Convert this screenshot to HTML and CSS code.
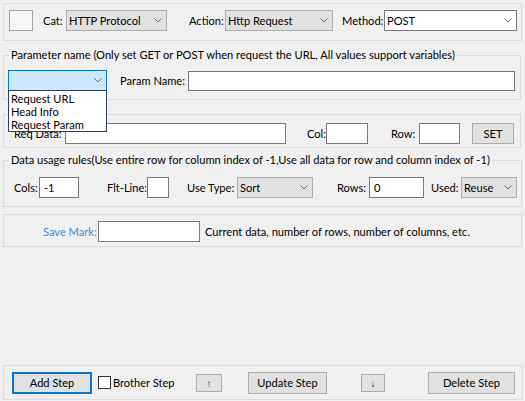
FILE: index.html
```html
<!DOCTYPE html>
<html>
<head>
<meta charset="utf-8">
<title>Step Editor</title>
<link rel="stylesheet" href="styles.css">
</head>
<body>
<div class="app">
  <div class="panel top">
    <div class="swatch"></div>
    <span class="lbl l-cat">Cat:</span>
    <div class="combo c-cat"><span class="val">HTTP Protocol</span><svg class="chev" width="8" height="5" viewBox="0 0 8 5"><path d="M0.5 0.5L4 4L7.5 0.5" fill="none" stroke="#6a6a6a"/></svg></div>
    <span class="lbl l-action">Action:</span>
    <div class="combo c-action"><span class="val">Http Request</span><svg class="chev" width="8" height="5" viewBox="0 0 8 5"><path d="M0.5 0.5L4 4L7.5 0.5" fill="none" stroke="#6a6a6a"/></svg></div>
    <span class="lbl l-method">Method:</span>
    <div class="combo edit c-method"><span class="val">POST</span><svg class="chev" width="8" height="5" viewBox="0 0 8 5"><path d="M0.5 0.5L4 4L7.5 0.5" fill="none" stroke="#6a6a6a"/></svg></div>
  </div>

  <fieldset class="grp g-param">
    <legend>Parameter name (Only set GET or POST when request the URL, All values support variables)</legend>
    <div class="row">
      <div class="dd-wrap">
        <div class="combo focus c-param"><span class="val"></span><svg class="chev" width="8" height="5" viewBox="0 0 8 5"><path d="M0.5 0.5L4 4L7.5 0.5" fill="none" stroke="#6a6a6a"/></svg></div>
        <ul class="dd-list">
          <li>Request URL</li>
          <li>Head Info</li>
          <li>Request Param</li>
        </ul>
      </div>
      <span class="lbl l-pname">Param Name:</span>
      <div class="input i-pname"></div>
    </div>
  </fieldset>

  <div class="panel g-req">
    <span class="lbl l-req">Req Data:</span>
    <div class="input i-req"></div>
    <span class="lbl l-col">Col:</span>
    <div class="input i-col"></div>
    <span class="lbl l-row">Row:</span>
    <div class="input i-row"></div>
    <div class="btn b-set">SET</div>
  </div>

  <fieldset class="grp g-usage">
    <legend>Data usage rules(Use entire row for column index of -1,Use all data for row and column index of -1)</legend>
    <div class="row">
      <span class="lbl l-cols">Cols:</span>
      <div class="input i-cols">-1</div>
      <span class="lbl l-flt">Flt-Line:</span>
      <div class="input i-flt"></div>
      <span class="lbl l-type">Use Type:</span>
      <div class="combo c-type"><span class="val">Sort</span><svg class="chev" width="8" height="5" viewBox="0 0 8 5"><path d="M0.5 0.5L4 4L7.5 0.5" fill="none" stroke="#6a6a6a"/></svg></div>
      <span class="lbl l-rows">Rows:</span>
      <div class="input i-rows">0</div>
      <span class="lbl l-used">Used:</span>
      <div class="combo c-used"><span class="val">Reuse</span><svg class="chev" width="8" height="5" viewBox="0 0 8 5"><path d="M0.5 0.5L4 4L7.5 0.5" fill="none" stroke="#6a6a6a"/></svg></div>
    </div>
  </fieldset>

  <div class="panel g-save">
    <span class="lbl l-save">Save Mark:</span>
    <div class="input i-save"></div>
    <span class="lbl l-hint">Current data, number of rows, number of columns, etc.</span>
  </div>

  <div class="panel bottom">
    <div class="btn default b-add">Add Step</div>
    <span class="check"></span>
    <span class="lbl l-brother">Brother Step</span>
    <div class="btn small b-up"><span class="arrow">↑</span></div>
    <div class="btn b-update">Update Step</div>
    <div class="btn small b-down"><span class="arrow">↓</span></div>
    <div class="btn b-delete">Delete Step</div>
  </div>
</div>
</body>
</html>
```

FILE: styles.css
```css
* { box-sizing: border-box; }
html, body { margin: 0; padding: 0; }
body {
  background: #f0f0f0;
  font-family: Lato, "Noto Sans", sans-serif;
  font-size: 11.1px;
  color: #000;
}
.app {
  width: 525px;
  height: 401px;
  display: flex;
  flex-direction: column;
  overflow: hidden;
}

/* generic controls */
.panel {
  margin-left: 3px;
  border: 1px solid #dcdcdc;
  display: flex;
  align-items: flex-start;
  flex: none;
}
.lbl {
  display: block;
  flex: none;
  height: 21px;
  line-height: 21px;
  white-space: nowrap;
}
.combo {
  flex: none;
  display: flex;
  align-items: center;
  height: 21px;
  border: 1px solid #adadad;
  background: #e1e1e1;
  padding-left: 2px;
}
.combo .val { flex: 1; line-height: 19px; white-space: nowrap; }
.combo .chev { flex: none; margin-right: 4px; }
.combo.edit { background: #fff; border-color: #7a7a7a; }
.combo.focus { background: #cce8ff; border-color: #0078d7; }
.input {
  flex: none;
  height: 21px;
  border: 1px solid #7a7a7a;
  background: #fff;
  padding-left: 4px;
  line-height: 19px;
}
.btn {
  flex: none;
  display: flex;
  align-items: center;
  justify-content: center;
  height: 22px;
  border: 1px solid #adadad;
  background: #e1e1e1;
  white-space: nowrap;
}
.btn.default { border: 2px solid #0078d7; }
.btn.small { height: 18px; }
.arrow {
  font-family: "Liberation Sans", sans-serif;
  font-size: 10px;
  line-height: 10px;
  padding-top: 3px;
  color: #222;
}

fieldset.grp {
  margin: 0 0 0 3px;
  border: 1px solid #dcdcdc;
  min-width: 0;
  flex: none;
}
fieldset.grp legend {
  padding: 0 2px;
  margin-left: 1px;
  line-height: 16px;
  white-space: nowrap;
}
.row { display: flex; align-items: flex-start; }

/* top panel */
.top { margin-top: 3px; width: 519px; height: 38px; padding-top: 6px; }
.swatch { flex: none; margin-left: 5px; width: 24px; height: 21px; border: 1px solid #a5a5a5; background: #f7f7f7; }
.l-cat { margin-left: 10px; width: 23px; }
.c-cat { width: 101px; }
.l-action { margin-left: 22px; width: 36px; }
.c-action { width: 108px; }
.l-method { margin-left: 9px; width: 42px; }
.c-method { width: 133px; }

/* parameter group */
.g-param { margin-top: 6px !important; width: 518px; padding: 7px 0 8px 4px; }
.dd-wrap { position: relative; flex: none; }
.c-param { width: 99px; }
.dd-list {
  position: absolute;
  left: 0;
  top: 20px;
  width: 99px;
  height: 42px;
  margin: 0;
  padding: 1px 0 0 2px;
  list-style: none;
  background: #fff;
  border: 1px solid #2c3e57;
  z-index: 5;
}
.dd-list li { line-height: 13px; white-space: nowrap; }
.l-pname { margin-left: 13px; width: 68px; }
.i-pname { width: 327px; height: 20px; margin-top: 1px; }

/* request data */
.g-req { margin-top: 14px; width: 518px; height: 34px; padding-top: 8px; }
.l-req { margin-left: 10px; width: 51px; }
.i-req { width: 221px; }
.l-col { margin-left: 21px; width: 19px; }
.i-col { width: 42px; }
.l-row { margin-left: 23px; width: 28px; }
.i-row { width: 41px; }
.b-set { margin-left: 12px; width: 42px; height: 21px; }

/* usage group */
.g-usage { margin-top: 4px !important; width: 519px; padding: 9px 0 8px 4px; }
.l-cols { margin-left: 6px; width: 25px; }
.i-cols { width: 40px; }
.l-flt { margin-left: 28px; width: 40px; }
.i-flt { width: 22px; }
.l-type { margin-left: 18px; width: 50px; }
.c-type { width: 76px; }
.l-rows { margin-left: 24px; width: 32px; }
.i-rows { width: 55px; }
.l-used { margin-left: 7px; width: 30px; }
.c-used { width: 56px; }

/* save mark */
.g-save { margin-top: 7px; width: 519px; height: 33px; padding-top: 6px; }
.l-save { margin-left: 39px; width: 55px; color: #3b8ad9; }
.i-save { width: 102px; }
.l-hint { margin-left: 5px; }

/* bottom bar */
.bottom { margin-top: auto; margin-bottom: 1px; width: 520px; height: 35px; align-items: center; }
.b-add { margin-left: 8px; width: 80px; }
.check { flex: none; margin-left: 6px; width: 13px; height: 13px; border: 1px solid #333; background: #fff; }
.l-brother { margin-left: 2px; width: 83px; }
.b-up { width: 26px; }
.b-update { margin-left: 26px; width: 79px; }
.b-down { margin-left: 34px; width: 24px; }
.b-delete { margin-left: 43px; width: 87px; }
```
